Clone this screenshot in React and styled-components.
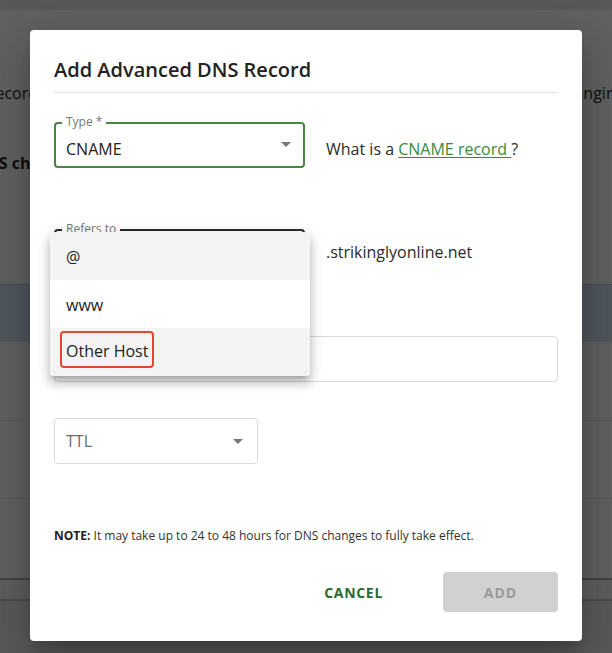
import React from "react";
import styled, { createGlobalStyle } from "styled-components";

const Global = createGlobalStyle`
  html, body { margin: 0; padding: 0; }
  body { font-family: "Open Sans", "Noto Sans", sans-serif; color: #222; }
  * { box-sizing: border-box; }
`;

const Page = styled.div`
  position: relative;
  width: 612px;
  height: 653px;
  overflow: hidden;
  background: #ffffff;
  font-family: "Open Sans", "Noto Sans", sans-serif;
`;

const TopBar = styled.div`
  height: 10px;
  background: #e6e6e6;
`;

const BgTextRow = styled.div`
  display: flex;
  justify-content: space-between;
  margin-top: ${(p) => p.$mt}px;
  height: 22px;
  font-size: 16px;
  line-height: 22px;
  font-weight: ${(p) => (p.$bold ? 700 : 400)};
  color: #2a2a2a;
`;

const BgClip = styled.div`
  width: ${(p) => p.$w}px;
  overflow: hidden;
  white-space: nowrap;
  display: flex;
  justify-content: ${(p) => (p.$end ? "flex-end" : "flex-start")};
`;

const BgShift = styled.span`
  flex: none;
  margin-left: ${(p) => p.$shift || 0}px;
`;

const Band = styled.div`
  margin-top: ${(p) => p.$mt}px;
  height: 58px;
  border-top: 1px solid #b9c2cc;
  background: #d2e4f6;
`;

const TableRow = styled.div`
  height: ${(p) => p.$h}px;
  border-bottom: ${(p) => p.$bw || 1}px solid ${(p) => p.$bc || "#e4e4e4"};
  background: ${(p) => p.$bg || "#ffffff"};
`;

const Backdrop = styled.div`
  position: absolute;
  inset: 0;
  background: rgba(0, 0, 0, 0.62);
`;

const Modal = styled.div`
  position: absolute;
  left: 30px;
  top: 30px;
  width: 552px;
  padding: 24px 24px 29px;
  background: #ffffff;
  border-radius: 4px;
  box-shadow: 0px 11px 15px -7px rgba(0, 0, 0, 0.2),
    0px 24px 38px 3px rgba(0, 0, 0, 0.14), 0px 9px 46px 8px rgba(0, 0, 0, 0.12);
`;

const Title = styled.h2`
  margin: 0;
  padding-bottom: 6px;
  border-bottom: 1px solid #e2e2e2;
  font-size: 20px;
  line-height: 32px;
  font-weight: 600;
  color: #222;
`;

const FieldRow = styled.div`
  display: flex;
  align-items: center;
  gap: 21px;
  margin-top: ${(p) => p.$mt}px;
`;

const borders = {
  focused: "2px solid #43893f",
  active: "2px solid #2b2b2b",
  plain: "1px solid #dadada",
};

const FieldBox = styled.div`
  position: relative;
  flex: none;
  display: flex;
  align-items: center;
  width: ${(p) => (p.$w ? `${p.$w}px` : "100%")};
  height: 46px;
  padding: ${(p) => (p.$labelled ? "8px 12px 0 10px" : "0 14px 0 11px")};
  border: ${(p) => borders[p.$variant || "plain"]};
  border-radius: 4px;
  background: #fff;
`;

const FloatLabel = styled.span`
  position: absolute;
  left: 6px;
  top: -10px;
  padding: 0 4px;
  background: #fff;
  font-size: 12px;
  line-height: 16px;
  color: #767676;
`;

const FieldValue = styled.span`
  flex: 1;
  font-size: 16px;
  line-height: 22px;
  color: ${(p) => (p.$muted ? "#6b6b6b" : "#222")};
`;

const Caret = styled.svg`
  flex: none;
  width: 24px;
  height: 24px;
  margin-right: -7px;
  margin-bottom: ${(p) => (p.$labelled ? 10 : 0)}px;
  fill: #777;
`;

const Helper = styled.span`
  font-size: 16px;
  line-height: 22px;
  color: #2b2b2b;
  margin-top: ${(p) => p.$mt || 0}px;
`;

const HelpLink = styled.a`
  color: #3a8a3d;
  text-decoration: underline;
  text-underline-offset: 2px;
`;

const Note = styled.p`
  margin: 63px 0 0;
  font-size: 12px;
  line-height: 18px;
  color: #333;
  b {
    font-weight: 700;
    color: #222;
  }
`;

const Footer = styled.div`
  display: flex;
  justify-content: flex-end;
  align-items: center;
  gap: 38px;
  margin-top: 27px;
`;

const Button = styled.button`
  height: 40px;
  border: none;
  border-radius: 4px;
  font-family: "Open Sans", "Noto Sans", sans-serif;
  font-size: 14px;
  font-weight: 700;
  letter-spacing: ${(p) => (p.$primary ? 1 : 0.7)}px;
  padding: 0 22px;
  cursor: pointer;
  background: ${(p) => (p.$primary ? "#d1d1d1" : "transparent")};
  color: ${(p) => (p.$primary ? "#9a9a9a" : "#2d6a30")};
  width: ${(p) => (p.$primary ? "115px" : "auto")};
`;

const Menu = styled.ul`
  position: absolute;
  left: 20px;
  top: 202px;
  width: 260px;
  margin: 0;
  padding: 0;
  list-style: none;
  background: #fff;
  border-radius: 4px;
  overflow: hidden;
  box-shadow: 0px 5px 5px -3px rgba(0, 0, 0, 0.2),
    0px 8px 10px 1px rgba(0, 0, 0, 0.14), 0px 3px 14px 2px rgba(0, 0, 0, 0.12);
`;

const MenuItem = styled.li`
  display: flex;
  align-items: center;
  height: 48px;
  padding: 2px 16px 0;
  font-size: 16px;
  line-height: 22px;
  color: #222;
  background: ${(p) => (p.$shaded ? "#f4f4f4" : "#ffffff")};
`;

const Highlight = styled.span`
  margin: 0 0 7px -6px;
  padding: 7px 4px 4px;
  border: 2px solid #e8452f;
  border-radius: 4px;
`;

const DropIcon = (props) => (
  <Caret viewBox="0 0 24 24" {...props}>
    <path d="M7 10l5 5 5-5z" />
  </Caret>
);

export default function App() {
  return (
    <Page>
      <Global />
      <TopBar />
      <BgTextRow $mt={72}>
        <BgClip $w={38} $end>
          <BgShift>record</BgShift>
        </BgClip>
        <BgClip $w={42}>
          <BgShift $shift={-13}>changing</BgShift>
        </BgClip>
      </BgTextRow>
      <BgTextRow $mt={48} $bold>
        <BgClip $w={40}>
          <BgShift $shift={-26}>DNS changes</BgShift>
        </BgClip>
      </BgTextRow>
      <Band $mt={110} />
      <TableRow $h={79} />
      <TableRow $h={78} />
      <TableRow $h={81} $bw={2} $bc="#b6b6b6" />
      <TableRow $h={21} $bw={2} $bc="#c2c2c2" $bg="#f6f6f6" />
      <TableRow $h={60} $bg="#ececec" $bw={0} />

      <Backdrop />

      <Modal role="dialog">
        <Title>Add Advanced DNS Record</Title>

        <FieldRow $mt={29}>
          <FieldBox $w={251} $variant="focused" $labelled>
            <FloatLabel>Type *</FloatLabel>
            <FieldValue>CNAME</FieldValue>
            <DropIcon $labelled />
          </FieldBox>
          <Helper $mt={8}>
            What is a <HelpLink href="#">CNAME record </HelpLink>?
          </Helper>
        </FieldRow>

        <FieldRow $mt={61}>
          <FieldBox $w={251} $variant="active" $labelled>
            <FloatLabel>Refers to</FloatLabel>
            <FieldValue />
          </FieldBox>
          <Helper>.strikinglyonline.net</Helper>
        </FieldRow>

        <FieldRow $mt={61}>
          <FieldBox $variant="plain">
            <FieldValue />
          </FieldBox>
        </FieldRow>

        <FieldRow $mt={36}>
          <FieldBox $w={204} $variant="plain">
            <FieldValue $muted>TTL</FieldValue>
            <DropIcon />
          </FieldBox>
        </FieldRow>

        <Note>
          <b>NOTE:</b> It may take up to 24 to 48 hours for DNS changes to fully
          take effect.
        </Note>

        <Footer>
          <Button>CANCEL</Button>
          <Button $primary disabled>
            ADD
          </Button>
        </Footer>

        <Menu role="listbox">
          <MenuItem $shaded>@</MenuItem>
          <MenuItem>www</MenuItem>
          <MenuItem $shaded>
            <Highlight>Other Host</Highlight>
          </MenuItem>
        </Menu>
      </Modal>
    </Page>
  );
}
